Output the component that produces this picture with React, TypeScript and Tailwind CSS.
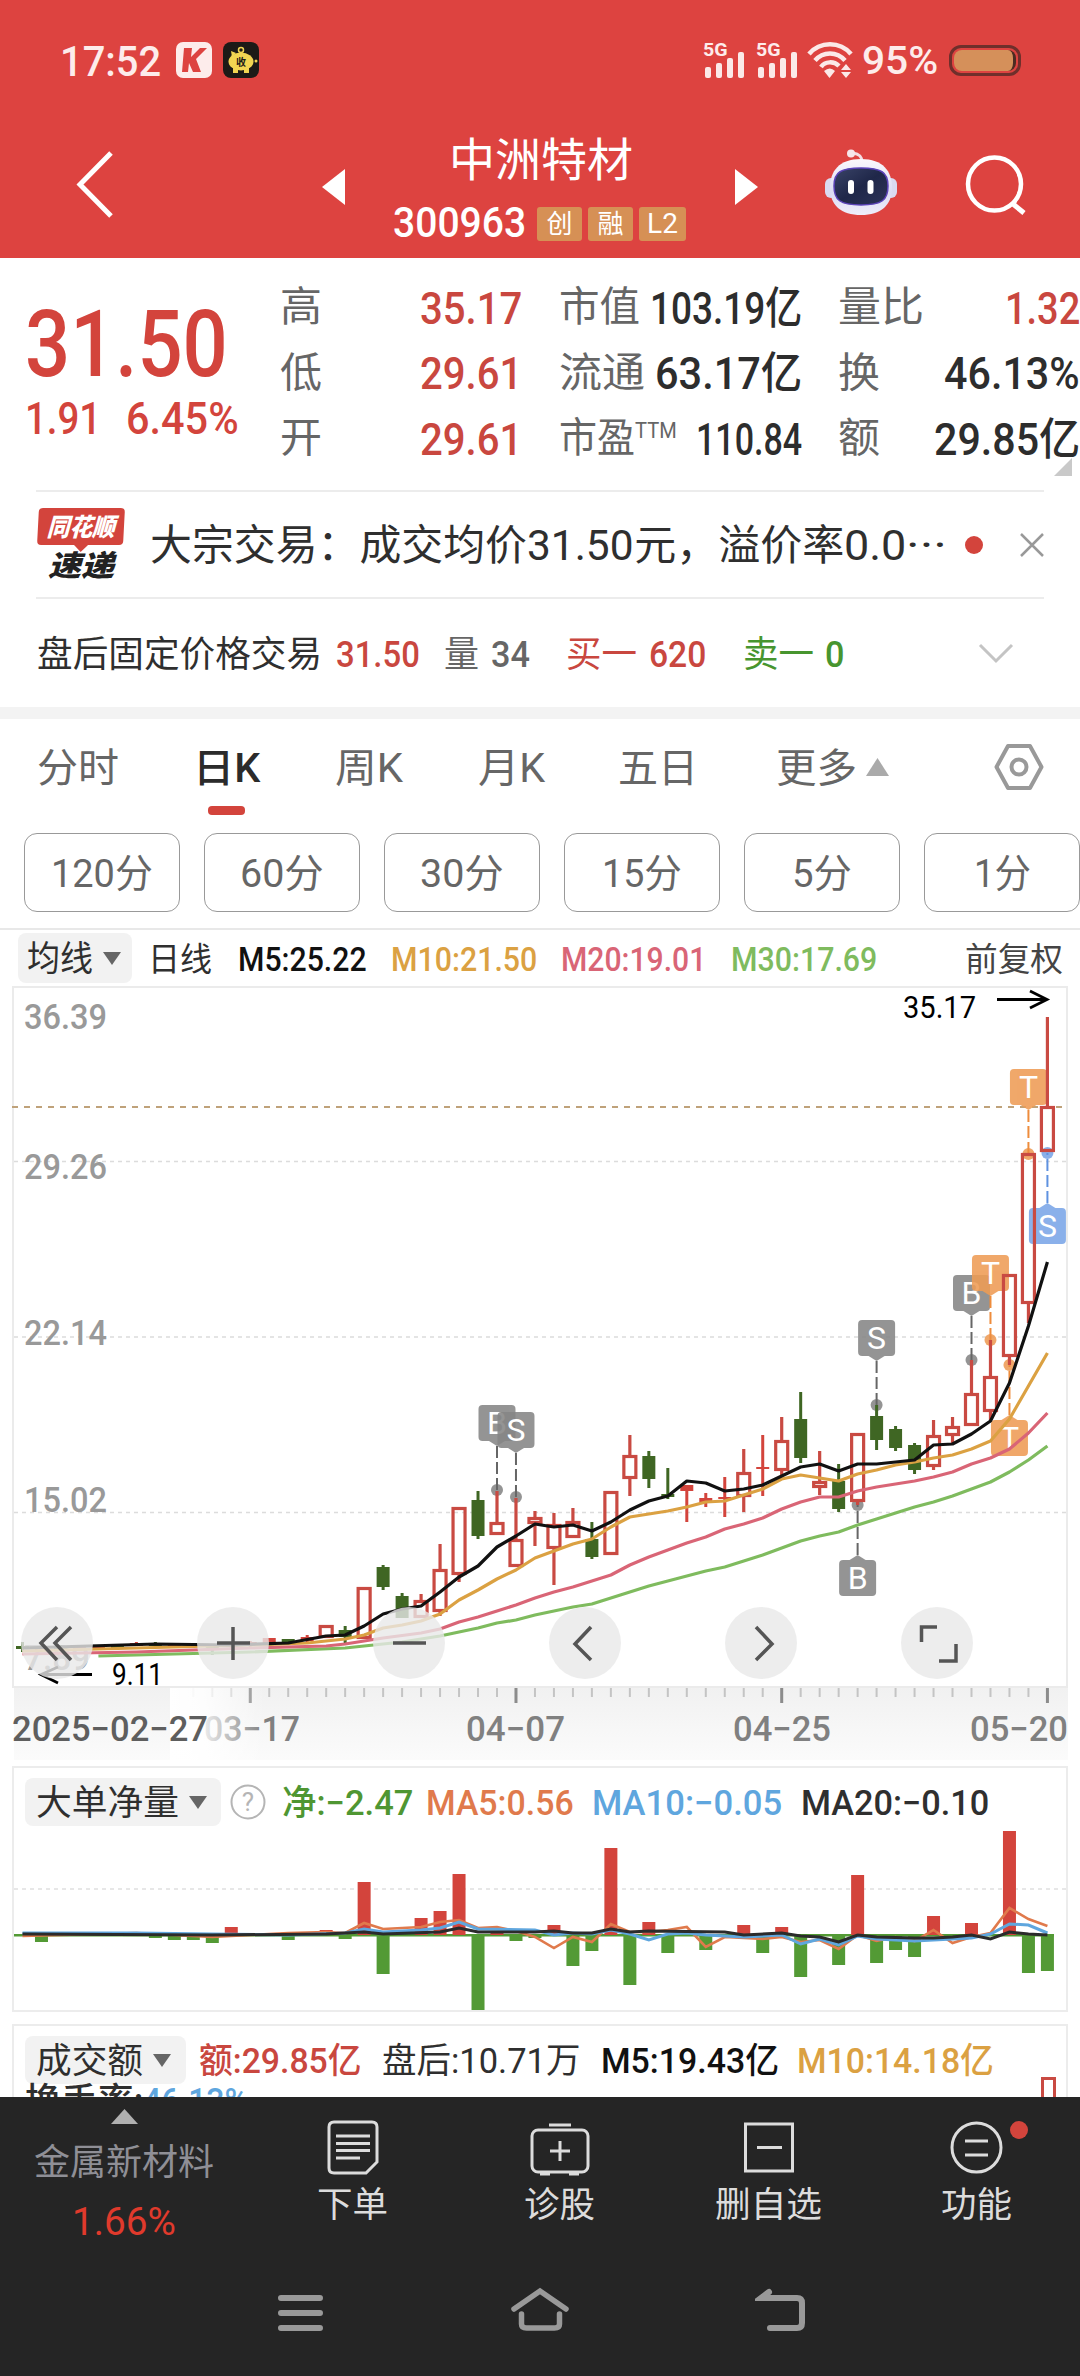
import { useLayoutEffect, useRef, useState } from "react";
import type { ReactNode } from "react";

const RED = "#d3443c";
const GREEN = "#3f6623";

// Text squeezed or stretched into a fixed width, like a condensed DIN face.
function Fit({ w, className = "", children }: { w: number; className?: string; children: ReactNode }) {
  const ref = useRef<HTMLSpanElement>(null);
  const [scale, setScale] = useState(1);
  useLayoutEffect(() => {
    if (ref.current) setScale(w / ref.current.offsetWidth);
  }, [w]);
  return (
    <span className={`inline-block shrink-0 whitespace-nowrap leading-none ${className}`} style={{ width: w }}>
      <span ref={ref} className="inline-block origin-left" style={{ transform: `translateY(0.035em) scaleX(${scale})` }}>
        {children}
      </span>
    </span>
  );
}

function Signal({ className = "" }: { className?: string }) {
  return (
    <div className={`w-[42px] h-[40px] flex flex-col ${className}`}>
      <Fit w={25} className="text-[18px] font-bold">5G</Fit>
      <svg className="-mt-[7px] ml-[2px]" width="40" height="27" fill="#fbe9e8">
        <rect x="0" y="16" width="6" height="11" rx="2" />
        <rect x="11" y="12" width="6" height="15" rx="2" />
        <rect x="22" y="7" width="6" height="20" rx="2" />
        <rect x="33" y="1" width="6" height="26" rx="2" />
      </svg>
    </div>
  );
}

function StatusBar() {
  return (
    <div className="h-[120px] flex items-center text-[#fdeceb]">
      <Fit w={101} className="ml-[60px] -mt-[2px] text-[43px] font-medium">17:52</Fit>
      <svg className="ml-[15px]" width="36" height="36" viewBox="0 0 36 36">
        <rect width="36" height="36" rx="7" fill="#fdeceb" />
        <path d="M8 6h8l-1 9 9-9h7L20 17l5 13h-8l-4-9-1 9H6z" fill="#dd4340" />
      </svg>
      <svg className="ml-[11px]" width="36" height="36" viewBox="0 0 36 36">
        <rect width="36" height="36" rx="8" fill="#1c1a17" />
        <circle cx="18" cy="8" r="2.500" fill="none" stroke="#f2d552" strokeWidth="1.500" />
        <ellipse cx="18" cy="19.500" rx="12.500" ry="9" fill="#f2d552" />
        <path d="M8 9l5 2-4 4zM10 26h5v5h-5zM21 26h5v5h-5z" fill="#f2d552" />
        <circle cx="33" cy="19" r="1.500" fill="#f2d552" />
        <text x="18" y="23.500" textAnchor="middle" fontSize="10" fontWeight="700" fill="#1c1a17">收</text>
      </svg>
      <Signal className="ml-[444px]" />
      <Signal className="ml-[11px]" />
      <svg className="ml-[9px]" width="46" height="38" viewBox="0 0 46 38" fill="none" stroke="#fbe9e8" strokeWidth="4.500">
        <path d="M2 13C13 0 33 0 44 13" />
        <path d="M8 19.500C16 10 30 10 38 19.500" />
        <path d="M14 26C18 20 27 20 32 25" />
        <path d="M17 30q6-5 11 0l-5.500 7z" fill="#fbe9e8" stroke="none" />
        <path d="M34 29l5-6 5 6zM34 31l5 6 5-6z" fill="#fbe9e8" stroke="none" />
      </svg>
      <Fit w={76} className="ml-[9px] text-[38px] font-medium">95%</Fit>
      <div className="ml-[11px] w-[72px] h-[31px] rounded-[12px] border-[3px] border-[#6f2f2b] p-[2px]">
        <div className="h-full rounded-[8px] bg-[#d5905a] border-r-[3px] border-[#4c2b22]" />
      </div>
    </div>
  );
}

function Robot() {
  return (
    <svg className="ml-[67px]" width="72" height="68" viewBox="0 0 72 68">
      <defs>
        <linearGradient id="shell" x1="0" y1="0" x2="0" y2="1">
          <stop offset="0" stopColor="#fbf8fc" />
          <stop offset="0.600" stopColor="#dcdcf3" />
          <stop offset="1" stopColor="#efeefa" />
        </linearGradient>
        <linearGradient id="visor" x1="0" y1="0" x2="1" y2="1">
          <stop offset="0" stopColor="#3a4468" />
          <stop offset="0.500" stopColor="#1f2749" />
          <stop offset="1" stopColor="#2c3358" />
        </linearGradient>
      </defs>
      <path d="M37 13c0-6-3-8-9-9" fill="none" stroke="#f4dde2" strokeWidth="3" />
      <circle cx="26" cy="4.500" r="4" fill="#f6e6ea" />
      <rect x="0" y="29" width="12" height="20" rx="6" fill="#dadaf0" />
      <rect x="60" y="29" width="12" height="20" rx="6" fill="#dadaf0" />
      <path d="M36 10c22 0 31 12 31 29S56 66 36 66 5 56 5 39s9-29 31-29z" fill="url(#shell)" />
      <path d="M36 19c20 0 27 4 27 18s-6 19-27 19S9 51 9 37s7-18 27-18z" fill="url(#visor)" stroke="#5b43b8" strokeWidth="1.500" />
      <rect x="23" y="31" width="6" height="14" rx="3" fill="#fff" />
      <rect x="42.500" y="31" width="6" height="14" rx="3" fill="#fff" />
    </svg>
  );
}

function NavBar() {
  return (
    <div className="h-[138px] flex text-white">
      <svg className="ml-[76px] mt-[31px]" width="38" height="68" fill="none" stroke="#fff" strokeWidth="5">
        <path d="M35 2L4 33.500 35 65" />
      </svg>
      <svg className="ml-[208px] mt-[49px]" width="23" height="36" fill="#fff">
        <path d="M23 0v36L0 18z" />
      </svg>
      <div className="ml-[48px] w-[296px] mt-[15px] flex flex-col items-center">
        <Fit w={184} className="text-[46px] h-[46px]">中洲特材</Fit>
        <div className="mt-[26px] h-[34px] w-full flex items-center gap-[6px]">
          <Fit w={133} className="mr-[5px] -mt-[4px] text-[42px] font-medium">300963</Fit>
          <Tag wide={false}>创</Tag>
          <Tag wide={false}>融</Tag>
          <Tag wide>L2</Tag>
        </div>
      </div>
      <svg className="ml-[46px] mt-[49px]" width="23" height="36" fill="#fff">
        <path d="M0 0v36l23-18z" />
      </svg>
      <div className="mt-[29px]">
        <Robot />
      </div>
      <svg className="ml-[66px] mt-[32px]" width="64" height="64" fill="none" stroke="#fff" strokeWidth="4.500">
        <circle cx="31.500" cy="32" r="26.500" />
        <path d="M50 52l11 9" strokeWidth="5" />
      </svg>
    </div>
  );
}

function Tag({ wide, children }: { wide: boolean; children: ReactNode }) {
  return (
    <span className={`${wide ? "w-[47px] text-[28px]" : "w-[45px] text-[26px]"} h-[34px] rounded-[3px] bg-[#d69055] flex items-center justify-center leading-none`}>
      {children}
    </span>
  );
}

function QuoteRow({ label, lw, value, vw, red, sup }: { label: string; lw: number; value: string; vw: number; red?: boolean; sup?: string }) {
  return (
    <div className="h-[65.500px] flex items-center">
      <Fit w={lw} className="text-[41px] text-[#666]">{label}</Fit>
      {sup && <Fit w={42} className="text-[22px] text-[#666] -mt-[16px]">{sup}</Fit>}
      <Fit w={vw} className={`ml-auto text-[44px] font-medium ${red ? "text-[#c9473f]" : "text-[#2d2d2d]"}`}>{value}</Fit>
    </div>
  );
}

function Quote() {
  return (
    <div className="h-[232px] flex relative">
      <div className="ml-[25px] w-[255px] pt-[38px] flex flex-col text-[#d3443c]">
        <Fit w={203} className="text-[92px] font-medium">31.50</Fit>
        <div className="mt-[7px] flex text-[44px] font-medium">
          <Fit w={76}>1.91</Fit>
          <Fit w={113} className="ml-[25px]">6.45%</Fit>
        </div>
      </div>
      <div className="pt-[16px] w-[242px]">
        <QuoteRow label="高" lw={42} value="35.17" vw={102} red />
        <QuoteRow label="低" lw={42} value="29.61" vw={102} red />
        <QuoteRow label="开" lw={42} value="29.61" vw={102} red />
      </div>
      <div className="pt-[16px] ml-[37px] w-[243px]">
        <QuoteRow label="市值" lw={81} value="103.19亿" vw={152} />
        <QuoteRow label="流通" lw={86} value="63.17亿" vw={147} />
        <QuoteRow label="市盈" lw={76} sup="TTM" value="110.84" vw={106} />
      </div>
      <div className="pt-[16px] ml-[36px] w-[242px]">
        <QuoteRow label="量比" lw={86} value="1.32" vw={75} red />
        <QuoteRow label="换" lw={42} value="46.13%" vw={136} />
        <QuoteRow label="额" lw={42} value="29.85亿" vw={146} />
      </div>
      <svg className="absolute right-[8px] bottom-[14px]" width="18" height="18" fill="#c9c9c9">
        <path d="M18 0v18H0z" />
      </svg>
    </div>
  );
}

function News() {
  return (
    <div className="mx-[36px] h-[109px] border-y-2 border-[#ececec] flex items-center">
      <div className="w-[90px] h-[74px] flex flex-col items-center">
        <div className="relative w-[86px] h-[37px] -skew-x-3 rounded-[4px] bg-[#d3443c] flex items-center justify-center">
          <Fit w={68} className="text-[25px] font-black italic text-white">同花顺</Fit>
          <svg className="absolute top-[36px] left-[36px]" width="16" height="9" fill="#d3443c">
            <path d="M0 0h16L8 8z" />
          </svg>
        </div>
        <Fit w={66} className="mt-[6px] text-[29px] font-black italic text-[#222]">速递</Fit>
      </div>
      <div className="ml-[25px] flex text-[42px] text-[#2f2f2f]">
        <Fit w={377}>大宗交易：成交均价</Fit>
        <Fit w={107}>31.50</Fit>
        <Fit w={210}>元，溢价率</Fit>
        <Fit w={62}>0.0</Fit>
        <Fit w={41}>···</Fit>
      </div>
      <span className="ml-[18px] w-[18px] h-[18px] rounded-full bg-[#d3443c]" />
      <svg className="ml-[37px]" width="24" height="24" fill="none" stroke="#999" strokeWidth="2.500">
        <path d="M1 1l22 22M23 1L1 23" />
      </svg>
    </div>
  );
}

function AfterHours() {
  return (
    <div className="h-[108px] pl-[37px] pt-px flex items-center text-[36px]">
      <Fit w={285} className="text-[#2f2f2f]">盘后固定价格交易</Fit>
      <Fit w={84} className="ml-[14px] font-medium text-[#c9473f]">31.50</Fit>
      <Fit w={35} className="ml-[24px] text-[#666]">量</Fit>
      <Fit w={39} className="ml-[12px] font-medium text-[#666]">34</Fit>
      <Fit w={71} className="ml-[36px] text-[#c9473f]">买一</Fit>
      <Fit w={57} className="ml-[12px] font-medium text-[#c9473f]">620</Fit>
      <Fit w={71} className="ml-[37px] text-[#47952f]">卖一</Fit>
      <Fit w={19} className="ml-[11px] font-medium text-[#47952f]">0</Fit>
      <svg className="ml-[134px]" width="36" height="22" fill="none" stroke="#c4c4c4" strokeWidth="3">
        <path d="M2 2l16 16L34 2" />
      </svg>
    </div>
  );
}

function Tabs() {
  return (
    <div className="h-[114px] pl-[37px] flex text-[40px] text-[#666] pt-[29px]">
      <Fit w={82}>分时</Fit>
      <div className="ml-[74px] w-[67px] flex flex-col items-center">
        <Fit w={67} className="font-medium text-[#2b2b2b]">日K</Fit>
        <span className="mt-[18px] w-[37px] h-[9px] rounded-[4px] bg-[#d3443c]" />
      </div>
      <Fit w={68} className="ml-[75px]">周K</Fit>
      <Fit w={67} className="ml-[75px]">月K</Fit>
      <Fit w={80} className="ml-[73px]">五日</Fit>
      <Fit w={81} className="ml-[78px]">更多</Fit>
      <svg className="ml-[9px] mt-[10px]" width="23" height="18" fill="#aaa">
        <path d="M11.500 0L23 18H0z" />
      </svg>
      <svg className="ml-[105px] -mt-[4px]" width="50" height="46" fill="none" stroke="#999" strokeWidth="4">
        <path d="M14 2h22l11.500 21L36 44H14L2.500 23z" strokeLinejoin="round" />
        <circle cx="25" cy="23" r="7.500" />
      </svg>
    </div>
  );
}

const PERIODS = [
  { label: "120分", w: 102 },
  { label: "60分", w: 84 },
  { label: "30分", w: 84 },
  { label: "15分", w: 80 },
  { label: "5分", w: 60 },
  { label: "1分", w: 57 },
];

function Periods() {
  return (
    <div className="h-[97px] pl-[24px] flex gap-[24px] border-b-2 border-[#e8e8e8]">
      {PERIODS.map((p) => (
        <div key={p.label} className="w-[156px] h-[79px] shrink-0 rounded-[13px] border-[1.500px] border-[#999] flex items-center justify-center pt-[2px] text-[#666]">
          <Fit w={p.w} className="text-[39px]">{p.label}</Fit>
        </div>
      ))}
    </div>
  );
}

function Picker({ w, pill, children }: { w: number; pill: string; children: ReactNode }) {
  return (
    <div className={`${pill} rounded-[8px] bg-[#f2f2f2] flex items-center shrink-0`}>
      <Fit w={w} className="text-[35px] text-[#2f2f2f]">{children}</Fit>
      <svg className="ml-[10px]" width="18" height="13" fill="#666">
        <path d="M0 0h18L9 13z" />
      </svg>
    </div>
  );
}

// ---- candle chart ---------------------------------------------------------

const x = (i: number) => 22.5 + 18.98 * i;

// kind, body top, body bottom, wick top, wick bottom
type Candle = [number, "r" | "g" | "f", number, number, number, number];

const CANDLES: Candle[] = [
  [0, "g", 1646, 1649, 1642, 1652],
  [1, "f", 1647, 1650, 1646, 1651],
  [2, "g", 1646, 1649, 1645, 1650],
  [3, "f", 1646, 1649, 1645, 1650],
  [4, "f", 1645, 1648, 1645, 1648],
  [5, "g", 1645, 1648, 1645, 1648],
  [6, "f", 1643, 1646, 1642, 1646],
  [7, "g", 1643, 1646, 1642, 1647],
  [8, "f", 1644, 1646, 1643, 1647],
  [9, "g", 1643, 1646, 1643, 1648],
  [10, "g", 1645, 1648, 1644, 1655],
  [11, "f", 1644, 1647, 1643, 1648],
  [12, "f", 1642, 1646, 1641, 1647],
  [13, "f", 1638, 1645, 1638, 1645],
  [14, "g", 1639, 1643, 1639, 1644],
  [15, "f", 1637, 1641, 1635, 1642],
  [16, "r", 1625, 1638, 1625, 1638],
  [17, "g", 1630, 1637, 1626, 1643],
  [18, "r", 1587, 1639, 1587, 1639],
  [19, "g", 1567, 1587, 1565, 1590],
  [20, "g", 1596, 1618, 1593, 1618],
  [21, "r", 1600, 1618, 1594, 1618],
  [22, "r", 1569, 1612, 1544, 1616],
  [23, "r", 1507, 1575, 1507, 1582],
  [24, "g", 1500, 1536, 1491, 1539],
  [25, "r", 1522, 1535, 1491, 1535],
  [26, "r", 1539, 1567, 1498, 1567],
  [27, "r", 1517, 1524, 1511, 1546],
  [28, "r", 1524, 1549, 1513, 1585],
  [29, "r", 1521, 1538, 1508, 1538],
  [30, "g", 1539, 1557, 1522, 1559],
  [31, "r", 1491, 1555, 1491, 1555],
  [32, "r", 1455, 1479, 1435, 1496],
  [33, "g", 1456, 1479, 1451, 1488],
  [34, "g", 1494, 1497, 1468, 1499],
  [35, "f", 1485, 1491, 1485, 1522],
  [36, "f", 1498, 1503, 1493, 1507],
  [37, "f", 1497, 1499, 1477, 1517],
  [38, "r", 1472, 1497, 1449, 1512],
  [39, "f", 1467, 1469, 1435, 1496],
  [40, "r", 1440, 1471, 1417, 1475],
  [41, "g", 1419, 1458, 1392, 1463],
  [42, "r", 1481, 1488, 1451, 1495],
  [43, "g", 1481, 1509, 1464, 1512],
  [44, "r", 1433, 1502, 1433, 1505],
  [45, "g", 1416, 1440, 1405, 1450],
  [46, "g", 1429, 1448, 1426, 1451],
  [47, "g", 1445, 1470, 1443, 1474],
  [48, "r", 1435, 1467, 1420, 1470],
  [49, "r", 1426, 1436, 1417, 1444],
  [50, "r", 1393, 1426, 1360, 1426],
  [51, "r", 1376, 1412, 1340, 1420],
  [52, "r", 1274, 1357, 1274, 1365],
  [53, "r", 1153, 1304, 1153, 1323],
  [54, "r", 1106, 1152, 1017, 1152],
];

type Point = [number, number];

const MA5: Point[] = [[0, 1648], [7, 1644], [11, 1645], [14, 1643], [16, 1636], [17, 1635], [18, 1626], [19, 1614], [20, 1609], [21, 1606], [22, 1592], [23, 1577], [24, 1566], [25, 1547], [26, 1536], [27, 1524], [28, 1527], [29, 1525], [30, 1531], [31, 1522], [32, 1510], [33, 1501], [34, 1496], [35, 1481], [36, 1483], [37, 1491], [38, 1489], [39, 1485], [40, 1476], [41, 1467], [42, 1464], [43, 1471], [44, 1464], [45, 1464], [46, 1462], [47, 1460], [48, 1445], [49, 1444], [50, 1434], [51, 1421], [52, 1383], [53, 1326], [54, 1262]];
const MA10: Point[] = [[0, 1651], [6, 1648], [12, 1645], [15, 1643], [17, 1639], [18, 1635], [19, 1628], [20, 1625], [21, 1621], [22, 1614], [23, 1600], [24, 1590], [25, 1579], [26, 1570], [27, 1558], [28, 1551], [29, 1544], [30, 1539], [31, 1527], [32, 1517], [33, 1514], [34, 1511], [35, 1507], [36, 1502], [37, 1501], [38, 1495], [39, 1489], [40, 1479], [41, 1475], [42, 1478], [43, 1481], [44, 1474], [45, 1470], [46, 1465], [47, 1462], [48, 1458], [49, 1455], [50, 1449], [51, 1441], [52, 1419], [53, 1386], [54, 1353]];
const MA20: Point[] = [[0, 1654], [6, 1652], [12, 1648], [16, 1646], [17, 1644], [18, 1641], [19, 1638], [21, 1633], [22, 1629], [23, 1622], [24, 1617], [25, 1611], [26, 1605], [27, 1598], [28, 1592], [29, 1587], [30, 1581], [31, 1575], [32, 1565], [33, 1557], [34, 1550], [35, 1543], [36, 1537], [37, 1529], [38, 1524], [39, 1518], [40, 1509], [41, 1502], [42, 1497], [43, 1497], [44, 1491], [45, 1487], [46, 1484], [47, 1481], [48, 1477], [49, 1472], [50, 1464], [51, 1458], [52, 1449], [53, 1433], [54, 1413]];
const MA30: Point[] = [[4, 1656], [8, 1654], [12, 1652], [17, 1648], [18, 1646], [20, 1642], [21, 1639], [22, 1636], [23, 1632], [24, 1628], [25, 1623], [26, 1620], [27, 1615], [28, 1611], [29, 1607], [30, 1604], [31, 1598], [32, 1592], [33, 1586], [34, 1581], [35, 1576], [36, 1571], [37, 1567], [38, 1561], [39, 1555], [40, 1548], [41, 1541], [42, 1536], [43, 1532], [44, 1525], [45, 1519], [46, 1513], [47, 1507], [48, 1502], [49, 1496], [50, 1489], [51, 1482], [52, 1472], [53, 1460], [54, 1446]];

const toPoints = (pts: Point[]) => pts.map(([i, y]) => `${x(i)},${y}`).join(" ");

const MARKS = [
  { i: 25, letter: "B", dot: 1490, up: true, color: "#868686", line: "#666" },
  { i: 26, letter: "S", dot: 1497, up: true, color: "#868686", line: "#666" },
  { i: 44, letter: "B", dot: 1505, up: false, color: "#868686", line: "#666" },
  { i: 45, letter: "S", dot: 1405, up: true, color: "#868686", line: "#666" },
  { i: 50, letter: "B", dot: 1360, up: true, color: "#868686", line: "#666" },
  { i: 51, letter: "T", dot: 1340, up: true, color: "#ee9c55", line: "#ee8c3c" },
  { i: 52, letter: "T", dot: 1365, up: false, color: "#ee9c55", line: "#ee8c3c" },
  { i: 53, letter: "T", dot: 1154, up: true, color: "#ee9c55", line: "#ee8c3c" },
  { i: 54, letter: "S", dot: 1153, up: false, color: "#7aa6e8", line: "#5f92e0" },
];

function Mark({ i, letter, dot, up, color, line }: (typeof MARKS)[number]) {
  const cx = x(i);
  const top = up ? dot - 85 : dot + 55;
  const tip = up ? top + 41 : top - 5;
  const base = up ? top + 36 : top;
  return (
    <g>
      <g fill={color} opacity="0.88">
        <rect x={cx - 18.5} y={top} width="37" height="36" rx="4" />
        <path d={`M${cx - 8} ${base}h16L${cx} ${tip}z`} />
        <circle cx={cx} cy={dot} r="6" />
      </g>
      <path d={`M${cx} ${tip}V${dot}`} stroke={line} strokeWidth="2" strokeDasharray="12 4" />
      <text x={cx} y={top + 29} textAnchor="middle" fontSize="32" fill="#fff">{letter}</text>
    </g>
  );
}

function CandleShape({ c: [i, kind, t, b, hi, lo] }: { c: Candle }) {
  const cx = x(i);
  if (kind === "g") {
    return (
      <g fill={GREEN}>
        <rect x={cx - 1.5} y={hi} width="3" height={lo - hi} />
        <rect x={cx - 6.5} y={t} width="13" height={b - t} />
      </g>
    );
  }
  if (kind === "f") {
    return (
      <g fill={RED}>
        <rect x={cx - 1.5} y={hi} width="3" height={lo - hi} />
        <rect x={cx - 6.5} y={t} width="13" height={b - t} />
      </g>
    );
  }
  return (
    <g stroke="#c94a42" strokeWidth="3.200" fill="none">
      <path d={`M${cx} ${hi}V${t}M${cx} ${b}V${lo}`} />
      <rect x={cx - 6} y={t + 1.5} width="12" height={b - t - 3} />
    </g>
  );
}

const LEVELS = [
  { label: "36.39", y: 1029 },
  { label: "29.26", y: 1179 },
  { label: "22.14", y: 1345 },
  { label: "15.02", y: 1512 },
  { label: "7.89", y: 1670 },
];

function KChart() {
  return (
    <div className="relative h-[774px]">
      <svg width="1080" height="774" viewBox="0 986 1080 774">
        <defs>
          <linearGradient id="axis" x1="0" y1="0" x2="0" y2="1">
            <stop offset="0" stopColor="#f1f1f1" />
            <stop offset="1" stopColor="#fbfbfb" />
          </linearGradient>
          <linearGradient id="fade" x1="0" y1="0" x2="1" y2="0">
            <stop offset="0" stopColor="#fff" />
            <stop offset="0.350" stopColor="#fff" stopOpacity="0.850" />
            <stop offset="1" stopColor="#fff" stopOpacity="0" />
          </linearGradient>
        </defs>
        <rect x="14" y="1688" width="1054" height="72" fill="url(#axis)" />
        <rect x="13" y="987" width="1054" height="700" fill="#fff" stroke="#ebebeb" strokeWidth="2" />
        <g stroke="#dcdcdc" strokeWidth="1.500" strokeDasharray="4 4">
          <path d="M14 1161.500H1066M14 1337H1066M14 1512.500H1066" />
        </g>
        <path d="M12 1107H1062" stroke="#bfa27a" strokeWidth="2" strokeDasharray="6 6" />
        <g fontSize="35" fontWeight="500" fill="#999">
          {LEVELS.map((l) => (
            <text key={l.label} x="24" y={l.y} textLength={l.label.length > 4 ? 83 : 66} lengthAdjust="spacingAndGlyphs">{l.label}</text>
          ))}
        </g>
        {MARKS.map((m) => <Mark key={m.i} {...m} />)}
        {CANDLES.map((c) => <CandleShape key={c[0]} c={c} />)}
        <g fill="none" strokeWidth="3.200" strokeLinejoin="round">
          <polyline points={toPoints(MA30)} stroke="#7fbb5e" />
          <polyline points={toPoints(MA20)} stroke="#d96576" />
          <polyline points={toPoints(MA10)} stroke="#dba142" />
          <polyline points={toPoints(MA5)} stroke="#111" />
        </g>
        <g fontSize="31" fill="#000">
          <text x="903" y="1018" textLength="73" lengthAdjust="spacingAndGlyphs">35.17</text>
          <text x="112" y="1685" textLength="51" lengthAdjust="spacingAndGlyphs">9.11</text>
        </g>
        <path d="M997 999.500h50M1030 991l17 8.500-17 8.500M92 1674.500H41M58 1667l-17 7.500 17 8.500" fill="none" stroke="#000" strokeWidth="2.800" />
        {Array.from({ length: 46 }, (_, k) => k + 9).map((i) => {
          const major = i === 12 || i === 26 || i === 40 || i === 54;
          return <rect key={i} x={x(i) - (major ? 1.5 : 1)} y="1688" width={major ? 3 : 2} height={major ? 15 : 9} fill={major ? "#8c8c8c" : "#c4c4c4"} />;
        })}
        <g fontSize="35" fontWeight="500" fill="#808080">
          <text x="204" y="1741" textLength="96" lengthAdjust="spacingAndGlyphs">03−17</text>
          <text x="466" y="1741" textLength="99" lengthAdjust="spacingAndGlyphs">04−07</text>
          <text x="733" y="1741" textLength="98" lengthAdjust="spacingAndGlyphs">04−25</text>
          <text x="970" y="1741" textLength="98" lengthAdjust="spacingAndGlyphs">05−20</text>
        </g>
        <rect x="170" y="1688" width="95" height="72" fill="url(#fade)" />
        <text x="12" y="1741" fontSize="35" fontWeight="500" fill="#5e5e5e" textLength="196" lengthAdjust="spacingAndGlyphs">2025−02−27</text>
      </svg>
      <div className="absolute left-[21px] top-[621px] flex gap-[104px]">
        <RoundButton d="M36 20L20 36l16 17M50 20L34 36l16 17" />
        <RoundButton d="M36 20v33M20 36h33" />
        <RoundButton d="M20 36h33" />
        <RoundButton d="M42 20L26 37l16 16" />
        <RoundButton d="M31 20l16 17-16 16" />
        <RoundButton d="M36 20H20.500V35M55 37V54H38" />
      </div>
    </div>
  );
}

function RoundButton({ d }: { d: string }) {
  return (
    <div className="w-[72px] h-[72px] rounded-full bg-[#e8e8e8]/80">
      <svg width="72" height="72" fill="none" stroke="#555" strokeWidth="3.500">
        <path d={d} />
      </svg>
    </div>
  );
}

// ---- big-order net volume -------------------------------------------------

// index and the y where the bar ends; the zero line lies at 1935
const BARS: Point[] = [[1, 1942], [2, 1933], [7, 1938], [8, 1940], [9, 1940], [10, 1943], [11, 1927], [14, 1940], [16, 1930], [17, 1939], [18, 1882], [19, 1974], [21, 1918], [22, 1911], [23, 1874], [24, 2011], [25, 1931], [26, 1941], [27, 1938], [28, 1925], [29, 1966], [30, 1951], [31, 1848], [32, 1985], [33, 1922], [34, 1953], [36, 1950], [38, 1925], [39, 1953], [40, 1927], [41, 1977], [43, 1965], [44, 1875], [45, 1963], [46, 1950], [47, 1957], [48, 1916], [50, 1923], [52, 1831], [53, 1973], [54, 1971]];
const NET5: Point[] = [[0, 1936], [4, 1934], [6, 1933], [8, 1935], [10, 1937], [12, 1935], [14, 1933], [16, 1932], [17, 1933], [18, 1923], [19, 1929], [20, 1928], [21, 1927], [22, 1922], [23, 1920], [24, 1928], [25, 1927], [26, 1931], [27, 1937], [28, 1948], [29, 1937], [30, 1942], [31, 1924], [32, 1932], [33, 1932], [34, 1930], [35, 1927], [36, 1947], [37, 1937], [38, 1938], [39, 1939], [40, 1937], [41, 1942], [42, 1940], [43, 1949], [44, 1935], [45, 1941], [46, 1937], [47, 1941], [48, 1930], [49, 1943], [50, 1937], [51, 1933], [52, 1908], [53, 1919], [54, 1926]];
const NET10: Point[] = [[0, 1933], [6, 1933], [10, 1934], [14, 1935], [17, 1933], [18, 1929], [19, 1932], [21, 1930], [22, 1928], [23, 1922], [24, 1929], [27, 1930], [28, 1935], [29, 1933], [30, 1934], [31, 1930], [32, 1934], [33, 1940], [34, 1934], [35, 1933], [36, 1935], [38, 1937], [40, 1935], [41, 1944], [42, 1939], [43, 1945], [44, 1936], [45, 1939], [46, 1940], [47, 1941], [49, 1939], [50, 1938], [51, 1934], [52, 1924], [53, 1925], [54, 1933]];
const NET20: Point[] = [[0, 1934], [10, 1935], [16, 1934], [18, 1932], [19, 1934], [22, 1932], [23, 1928], [24, 1932], [27, 1932], [28, 1931], [29, 1933], [30, 1933], [31, 1929], [32, 1932], [33, 1931], [37, 1932], [38, 1935], [40, 1933], [41, 1936], [42, 1937], [43, 1942], [44, 1935], [45, 1937], [47, 1938], [48, 1938], [49, 1937], [50, 1935], [51, 1939], [52, 1932], [53, 1934], [54, 1935]];

function NetVolume() {
  return (
    <div className="mx-[12px] mt-[6px] h-[246px] border-2 border-[#ececec] overflow-hidden">
      <div className="h-[58px] pt-[10px] flex items-center text-[35px]">
        <Picker w={143} pill="ml-[11px] w-[196px] h-[48px] pl-[11px]">大单净量</Picker>
        <svg className="ml-[8px]" width="38" height="38">
          <circle cx="19" cy="19" r="16.500" fill="none" stroke="#b5b5b5" strokeWidth="2" />
          <text x="19" y="28" textAnchor="middle" fontSize="26" fill="#b5b5b5">?</text>
        </svg>
        <Fit w={131} className="ml-[15px] font-medium text-[#4f9632]">净:−2.47</Fit>
        <Fit w={148} className="ml-[13px] font-medium text-[#e07a4c]">MA5:0.56</Fit>
        <Fit w={190} className="ml-[18px] font-medium text-[#5fa6de]">MA10:−0.05</Fit>
        <Fit w={188} className="ml-[19px] font-medium text-[#2f2f2f]">MA20:−0.10</Fit>
      </div>
      <svg width="1052" height="184" viewBox="14 1826 1052 184">
        <path d="M14 1889H1066" stroke="#e0e0e0" strokeWidth="1.500" strokeDasharray="4 4" />
        <rect x="14" y="1934" width="1040" height="2.500" fill="#539a35" />
        {BARS.map(([i, y]) => (
          <rect key={i} x={x(i) - 6.5} y={Math.min(y, 1935)} width="13" height={Math.abs(y - 1935)} fill={y < 1935 ? RED : "#539a35"} />
        ))}
        <g fill="none" strokeWidth="2.600">
          <polyline points={toPoints(NET5)} stroke="#e07a4c" />
          <polyline points={toPoints(NET10)} stroke="#5fa6de" strokeWidth="3" />
          <polyline points={toPoints(NET20)} stroke="#2b2b2b" strokeWidth="3" />
        </g>
      </svg>
    </div>
  );
}

function Turnover() {
  return (
    <div className="relative mx-[12px] mt-[12px] h-[120px] border-2 border-[#ececec]">
      <div className="h-[58px] pt-[10px] flex items-center text-[35px]">
        <Picker w={107} pill="ml-[11px] w-[161px] h-[48px] pl-[11px]">成交额</Picker>
        <Fit w={163} className="ml-[13px] font-medium text-[#c9473f]">额:29.85亿</Fit>
        <Fit w={198} className="ml-[20px] text-[#2f2f2f]">盘后:10.71万</Fit>
        <Fit w={178} className="ml-[21px] font-medium text-[#111]">M5:19.43亿</Fit>
        <Fit w={197} className="ml-[18px] font-medium text-[#dba142]">M10:14.18亿</Fit>
      </div>
      <div className="-mt-px ml-[11px] flex text-[35px] font-medium">
        <Fit w={118} className="text-[#2f2f2f]">换手率:</Fit>
        <Fit w={105} className="text-[#5fa6de]">46.13%</Fit>
      </div>
      <div className="absolute right-[10px] top-[51px] w-[15px] h-[50px] border-[3px] border-[#c94a42]" />
    </div>
  );
}

function Action({ label, w, margin, children }: { label: string; w: number; margin: string; children: ReactNode }) {
  return (
    <div className={`${margin} flex flex-col items-center`}>
      <svg width="64" height="60" fill="none" stroke="#dcdcdc" strokeWidth="3">{children}</svg>
      <Fit w={w} className="mt-[10px] text-[35px] text-[#dcdcdc]">{label}</Fit>
    </div>
  );
}

function BottomBar() {
  return (
    <div className="h-[279px] bg-[#252525]">
      <div className="h-[160px] flex">
        <div className="ml-[34px] w-[180px] flex flex-col items-center">
          <svg className="mt-[12px]" width="27" height="15" fill="#b0b0b0">
            <path d="M13.500 0L27 15H0z" />
          </svg>
          <Fit w={180} className="mt-[20px] text-[36px] text-[#8f8f96]">金属新材料</Fit>
          <Fit w={104} className="mt-[22px] text-[38px] text-[#e03a2c]">1.66%</Fit>
        </div>
        <Action label="下单" w={71} margin="ml-[103px] mt-[20px]">
          <path d="M13 5h38q5 0 5 5v35L45 56H13q-5 0-5-5V10q0-5 5-5z" />
          <path d="M15 19h34M15 26.500h34M15 33.500h34M15 41h24" />
        </Action>
        <Action label="诊股" w={71} margin="ml-[136px] mt-[20px]">
          <rect x="4" y="13" width="56" height="42" rx="6" />
          <path d="M21 8h22M32 24v20M22 34h20M12 57h10M41 57h10" />
        </Action>
        <Action label="删自选" w={107} margin="ml-[120px] mt-[20px]">
          <rect x="8.500" y="7" width="47" height="47" />
          <path d="M20 30.500h25" />
        </Action>
        <div className="relative">
          <Action label="功能" w={71} margin="ml-[119px] mt-[20px]">
            <circle cx="31.500" cy="30.500" r="24.500" />
            <path d="M20 24h23M20 38h23" />
          </Action>
          <span className="absolute right-[-16px] top-[24px] w-[18px] h-[18px] rounded-full bg-[#d3443c]" />
        </div>
      </div>
      <div className="h-[119px] pt-[28px] flex">
        <svg className="ml-[277px]" width="46" height="50" stroke="#999" strokeWidth="6" strokeLinecap="round">
          <path d="M4 13h39M4 28h39M4 43h39" />
        </svg>
        <svg className="ml-[186px]" width="62" height="50" fill="none" stroke="#999" strokeWidth="5.500" strokeLinecap="round">
          <path d="M5 24L31 6l26 18M12.500 29v10q0 4 5 4h28q5 0 5-4V29" />
        </svg>
        <svg className="ml-[184px]" width="54" height="50" fill="none" stroke="#999" strokeWidth="6" strokeLinecap="round">
          <path d="M14 7L6 13h36q5 0 5 5v20q0 5-5 5H15" />
        </svg>
      </div>
    </div>
  );
}

export default function App() {
  return (
    <div className="w-[1080px] h-[2376px] overflow-hidden bg-white font-[Roboto,'Noto_Sans_CJK_SC',sans-serif]">
      <div className="h-[2097px] overflow-hidden">
        <header className="bg-[#dd4340]">
          <StatusBar />
          <NavBar />
        </header>
        <Quote />
        <News />
        <AfterHours />
        <div className="h-[12px] bg-[#f3f3f3]" />
        <Tabs />
        <Periods />
        <div className="h-[56px] flex items-center text-[33px]">
          <Picker w={66} pill="ml-[18px] w-[114px] h-[50px] pl-[9px]">均线</Picker>
          <Fit w={64} className="ml-[16px] text-[#2f2f2f]">日线</Fit>
          <Fit w={129} className="ml-[26px] font-medium text-[#111]">M5:25.22</Fit>
          <Fit w={146} className="ml-[24px] font-medium text-[#dba142]">M10:21.50</Fit>
          <Fit w={145} className="ml-[24px] font-medium text-[#d96576]">M20:19.01</Fit>
          <Fit w={146} className="ml-[25px] font-medium text-[#7fbb5e]">M30:17.69</Fit>
          <Fit w={98} className="ml-[88px] text-[#444]">前复权</Fit>
        </div>
        <KChart />
        <NetVolume />
        <Turnover />
      </div>
      <BottomBar />
    </div>
  );
}
